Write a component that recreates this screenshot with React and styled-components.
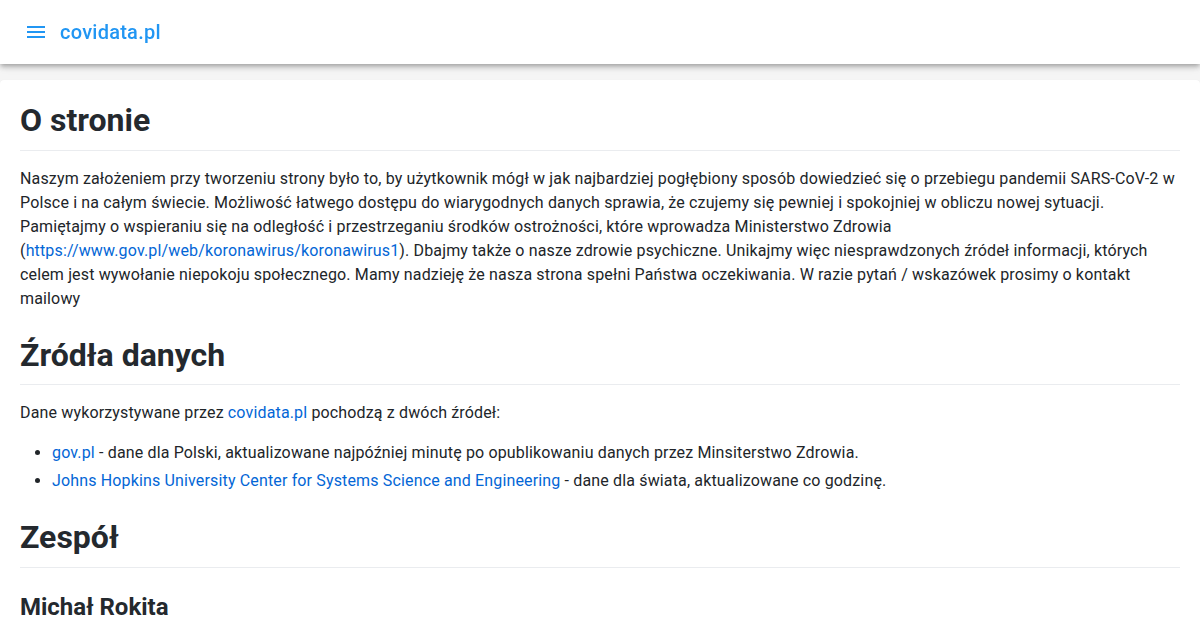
import React from "react";
import styled, { createGlobalStyle } from "styled-components";

const Global = createGlobalStyle`
  html, body { margin: 0; padding: 0; overflow: hidden; }
  body {
    background: #f5f5f5;
    font-family: Roboto, "Liberation Sans", sans-serif;
    -webkit-font-smoothing: antialiased;
  }
  * { box-sizing: border-box; }
`;

const AppBar = styled.header`
  position: fixed;
  top: 0;
  left: 0;
  right: 0;
  height: 64px;
  background: #fff;
  display: flex;
  align-items: center;
  padding: 0 24px;
  gap: 12px;
  z-index: 5;
  box-shadow: 0 2px 4px -1px rgba(0,0,0,.2), 0 4px 5px 0 rgba(0,0,0,.14), 0 1px 10px 0 rgba(0,0,0,.12);
`;

const NavIcon = styled.button`
  width: 24px;
  height: 24px;
  padding: 0;
  border: 0;
  background: none;
  display: flex;
  color: #2196f3;
`;

const Title = styled.div`
  font-size: 20px;
  font-weight: 500;
  color: #2196f3;
  letter-spacing: 0.0125em;
  line-height: 1;
`;

const Main = styled.main`
  padding-top: 80px;
`;

const Card = styled.article`
  background: #fff;
  border-radius: 4px;
  padding: 20px;
  color: #212529;
  font-size: 16px;
  line-height: 1.5;
  box-shadow: 0 0 1px rgba(0,0,0,.06);
`;

const H = styled.h2`
  font-size: ${p => (p.$small ? "24px" : "32px")};
  font-weight: 700;
  line-height: 1.25;
  margin: 24px 0 16px;
  padding-bottom: ${p => (p.$small ? "0" : "0.3em")};
  border-bottom: ${p => (p.$small ? "none" : "1px solid #eaecef")};
  color: #24292e;
  &:first-child { margin-top: 0; }
`;

const P = styled.p`
  margin: 0 0 16px;
  letter-spacing: 0.15px;
`;

const List = styled.ul`
  margin: 0 0 16px;
  padding-left: 2em;
  letter-spacing: 0.15px;
`;

const Item = styled.li`
  & + & { margin-top: 4px; }
`;

const A = styled.a`
  color: #0366d6;
  text-decoration: none;
`;

export default function App() {
  return (
    <>
      <Global />
      <AppBar>
        <NavIcon aria-label="menu">
          <svg width="24" height="24" viewBox="0 0 24 24" fill="currentColor">
            <path d="M3,6H21V8H3V6M3,11H21V13H3V11M3,16H21V18H3V16Z" />
          </svg>
        </NavIcon>
        <Title>covidata.pl</Title>
      </AppBar>
      <Main>
        <Card>
          <H>O stronie</H>
          <P>
            Naszym założeniem przy tworzeniu strony było to, by użytkownik mógł w jak najbardziej pogłębiony sposób dowiedzieć się o przebiegu pandemii SARS-CoV-2 w Polsce i na całym świecie. Możliwość łatwego dostępu do wiarygodnych danych sprawia, że czujemy się pewniej i spokojniej w obliczu nowej sytuacji. Pamiętajmy o wspieraniu się na odległość i przestrzeganiu środków ostrożności, które wprowadza Ministerstwo Zdrowia (<A href="#">https://www.gov.pl/web/koronawirus/koronawirus1</A>). Dbajmy także o nasze zdrowie psychiczne. Unikajmy więc niesprawdzonych źródeł informacji, których celem jest wywołanie niepokoju społecznego. Mamy nadzieję że nasza strona spełni Państwa oczekiwania. W razie pytań / wskazówek prosimy o kontakt mailowy
          </P>
          <H>Źródła danych</H>
          <P>
            Dane wykorzystywane przez <A href="#">covidata.pl</A> pochodzą z dwóch źródeł:
          </P>
          <List>
            <Item>
              <A href="#">gov.pl</A> - dane dla Polski, aktualizowane najpóźniej minutę po opublikowaniu danych przez Minsiterstwo Zdrowia.
            </Item>
            <Item>
              <A href="#">Johns Hopkins University Center for Systems Science and Engineering</A> - dane dla świata, aktualizowane co godzinę.
            </Item>
          </List>
          <H>Zespół</H>
          <H as="h3" $small>Michał Rokita</H>
        </Card>
      </Main>
    </>
  );
}
